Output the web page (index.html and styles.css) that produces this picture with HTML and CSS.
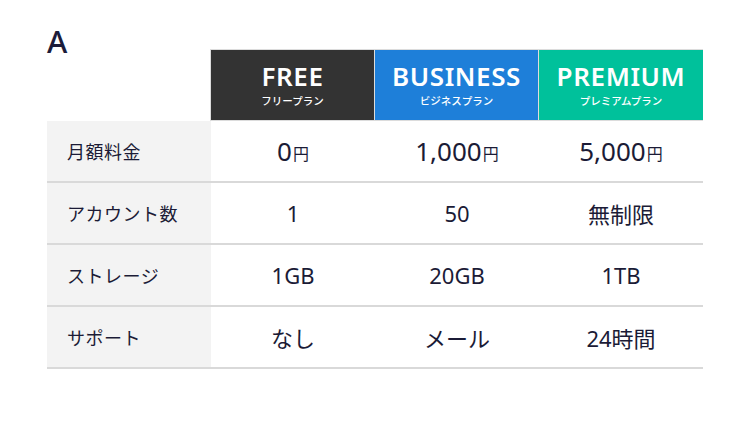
FILE: index.html
```html
<!DOCTYPE html>
<html lang="ja">
<head>
<meta charset="utf-8">
<link rel="stylesheet" href="styles.css">
</head>
<body>
<div class="page">
  <div class="title">A</div>
  <div class="plans">
    <div class="corner"></div>
    <div class="plan plan-free"><span class="plan-name">FREE</span><span class="plan-sub">フリープラン</span></div>
    <div class="plan plan-business"><span class="plan-name">BUSINESS</span><span class="plan-sub">ビジネスプラン</span></div>
    <div class="plan plan-premium"><span class="plan-name">PREMIUM</span><span class="plan-sub">プレミアムプラン</span></div>

    <div class="label">月額料金</div>
    <div class="val"><span class="price">0</span><span class="yen">円</span></div>
    <div class="val"><span class="price">1,000</span><span class="yen">円</span></div>
    <div class="val"><span class="price">5,000</span><span class="yen">円</span></div>

    <div class="label">アカウント数</div>
    <div class="val">1</div>
    <div class="val">50</div>
    <div class="val">無制限</div>

    <div class="label">ストレージ</div>
    <div class="val">1GB</div>
    <div class="val">20GB</div>
    <div class="val">1TB</div>

    <div class="label">サポート</div>
    <div class="val">なし</div>
    <div class="val">メール</div>
    <div class="val">24時間</div>
  </div>
</div>
</body>
</html>
```

FILE: styles.css
```css
* { box-sizing: border-box; }
html, body { margin: 0; padding: 0; background: #ffffff; }
body {
  font-family: "Noto Sans", "Noto Sans CJK JP", sans-serif;
  color: #1b1b36;
}
.page {
  padding: 33px 47px 0 47px;
}
.title {
  font-size: 31px;
  line-height: 17px;
  height: 17px;
  font-weight: 500;
  margin-bottom: -1px;
  color: #1c1c3a;
}
.plans {
  display: grid;
  grid-template-columns: 164px 164px 164px 164px;
  grid-template-rows: 72px repeat(4, 62px);
  width: 656px;
}
.corner { background: transparent; }
.plan {
  border: 1px solid #dcdcdc;
  margin-left: -1px;
  color: #ffffff;
  display: flex;
  flex-direction: column;
  align-items: center;
  justify-content: flex-start;
  padding-top: 8px;
}
.plan-free { background: #333333; }
.plan-business { background: #1e7fd9; }
.plan-premium { background: #00c19b; border-right: none; }
.plan-name {
  font-size: 26px;
  line-height: 36px;
  font-weight: 600;
  letter-spacing: 0.6px;
}
.plan-sub {
  font-family: "Noto Sans", "Noto Sans CJK JP", sans-serif;
  font-size: 10.5px;
  line-height: 11px;
  font-weight: 500;
  margin-top: 2px;
}
.label, .val {
  border-bottom: 2px solid #d9d9d9;
  display: flex;
  align-items: center;
}
.label {
  background: #f3f3f3;
  padding-left: 20px;
  font-family: "Noto Sans CJK JP", sans-serif;
  font-size: 18px;
  letter-spacing: 0.5px;
  color: #1b1b36;
}
.val {
  justify-content: center;
  font-size: 22px;
  color: #1b1b36;
  font-family: "Noto Sans", "Noto Sans CJK JP", sans-serif;
}
.price {
  font-size: 26px;
  line-height: 1;
}
.yen {
  font-family: "Noto Sans CJK JP", sans-serif;
  font-size: 16px;
  margin-left: 1px;
  position: relative;
  top: 2px;
}
```
